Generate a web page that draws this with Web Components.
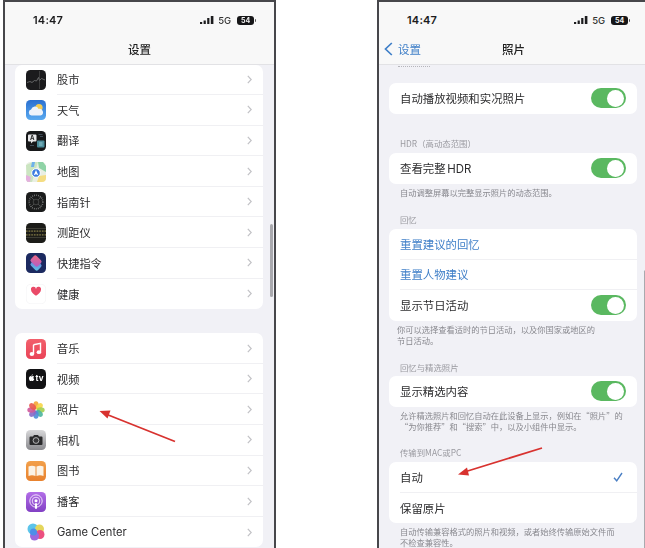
<!DOCTYPE html>
<html lang="zh"><head><meta charset="utf-8"><title>设置 照片</title>
<style>
html,body{margin:0;padding:0;background:#fff;}
body{width:645px;height:548px;overflow:hidden;position:relative;font-family:Inter,"Noto Sans CJK SC",sans-serif;color:#2c2c2e;}
#page{display:flex;gap:101px;padding-left:3px;filter:blur(.5px);}
#arrows{position:absolute;left:0;top:0;}
</style></head><body>
<div id="page">
<ios-phone nav="设置" thumb-top="224" thumb-h="73">
  <ios-card>
    <ios-row icon="stocks" chevron>股市</ios-row>
    <ios-row icon="weather" chevron>天气</ios-row>
    <ios-row icon="translate" chevron>翻译</ios-row>
    <ios-row icon="maps" chevron>地图</ios-row>
    <ios-row icon="compass" chevron>指南针</ios-row>
    <ios-row icon="measure" chevron>测距仪</ios-row>
    <ios-row icon="shortcuts" chevron>快捷指令</ios-row>
    <ios-row icon="health" chevron last>健康</ios-row>
  </ios-card>
  <ios-card style="margin-top:24px">
    <ios-row icon="music" chevron>音乐</ios-row>
    <ios-row icon="tv" chevron>视频</ios-row>
    <ios-row icon="photos" chevron>照片</ios-row>
    <ios-row icon="camera" chevron>相机</ios-row>
    <ios-row icon="books" chevron>图书</ios-row>
    <ios-row icon="podcasts" chevron>播客</ios-row>
    <ios-row icon="gamecenter" chevron last>Game Center</ios-row>
  </ios-card>
</ios-phone>
<ios-phone nav="照片" back="设置" thumb-top="270" thumb-h="300">
  <ios-clip></ios-clip>
  <ios-card style="margin-top:15.5px"><ios-row plain toggle last>自动播放视频和实况照片</ios-row></ios-card>
  <ios-head style="margin-top:24.4px">HDR（高动态范围）</ios-head>
  <ios-card><ios-row plain toggle last>查看完整 HDR</ios-row></ios-card>
  <ios-note>自动调整屏幕以完整显示照片的动态范围。</ios-note>
  <ios-head style="margin-top:16.4px">回忆</ios-head>
  <ios-card>
    <ios-row plain link>重置建议的回忆</ios-row>
    <ios-row plain link>重置人物建议</ios-row>
    <ios-row plain toggle last>显示节日活动</ios-row>
  </ios-card>
  <ios-note style="padding-left:8px">你可以选择查看适时的节日活动，以及你国家或地区的<br>节日活动。</ios-note>
  <ios-head style="margin-top:16.7px;margin-bottom:4px">回忆与精选照片</ios-head>
  <ios-card><ios-row plain toggle last>显示精选内容</ios-row></ios-card>
  <ios-note>允许精选照片和回忆自动在此设备上显示，例如在“照片”的<br>“为你推荐”和“搜索”中，以及小组件中显示。</ios-note>
  <ios-head style="margin-top:15.9px">传输到MAC或PC</ios-head>
  <ios-card>
    <ios-row plain check>自动</ios-row>
    <ios-row plain last>保留原片</ios-row>
  </ios-card>
  <ios-note style="padding-top:3px">自动传输兼容格式的照片和视频，或者始终传输原始文件而<br>不检查兼容性。</ios-note>
</ios-phone>
</div>
<svg id="arrows" width="645" height="548" viewBox="0 0 645 548" fill="none">
  <path d="M175 441.5 107 414.5" stroke="#d8322f" stroke-width="1.8"/>
  <path d="M99.500 411 110.500 410.500 107.500 418.500Z" fill="#d8322f"/>
  <path d="M542 448 466 471.500" stroke="#d8322f" stroke-width="1.800"/>
  <path d="M458 474.500 467 467.500 469 475.500Z" fill="#d8322f"/>
</svg>
<script>
const ICONS={
stocks:`<rect width="20" height="20" rx="4.500" fill="#1b1b1d"/><path d="M1 12.500 4 11.500 6 12.500 8.500 10.500 10.500 11 12.500 7.500 13.500 10.500 15.500 8.500 19 10" stroke="#77787a" stroke-width=".8" fill="none"/><path d="M13.500 1V19" stroke="#555" stroke-width=".6"/>`,
weather:`<defs><linearGradient id="w" x1="0" y1="0" x2="0" y2="1"><stop offset="0" stop-color="#2a6fd0"/><stop offset="1" stop-color="#5aaaf0"/></linearGradient></defs><rect width="20" height="20" rx="4.500" fill="url(#w)"/><circle cx="13" cy="7.500" r="3.600" fill="#f4cd55"/><path d="M5.500 15.500a3 3 0 0 1-.4-5.900 4 4 0 0 1 7.500-.7 3.300 3.300 0 0 1 1.900 6.600Z" fill="#eef3fa"/>`,
translate:`<rect width="20" height="20" rx="4.500" fill="#17181a"/><path d="M3 3.500h6.500a1 1 0 0 1 1 1v5a1 1 0 0 1-1 1H7l-2 2v-2H3a1 1 0 0 1-1-1v-5a1 1 0 0 1 1-1Z" fill="#e8e8ea"/><text x="6.200" y="9.300" font-size="6" font-family="Inter" font-weight="700" text-anchor="middle" fill="#222">A</text><rect x="11" y="9.500" width="7.500" height="7" rx="1" fill="#4b8c9a"/><path d="M13 12h3.500M13 14h3.500" stroke="#a8d8e0" stroke-width=".8"/><path d="M12.500 3.500h4M14 5.500h3M4 14.500h4" stroke="#4a5a68" stroke-width=".8"/>`,
maps:`<rect width="20" height="20" rx="4.500" fill="#e9efe3"/><path d="M0 3 7 0h5L6 20H1Z" fill="#cbe5c1"/><path d="M12 0h5l3 4v6L13 6Z" fill="#8fd3a6"/><path d="M0 13l5 2-1 5H3q-3 0-3-3Z" fill="#e4b1de"/><path d="M13 14l7-1v3q0 4-4 4h-5Z" fill="#f5dd82"/><path d="M6 0h3L8 5H5Z" fill="#6fb1ea"/><circle cx="10" cy="11" r="4.300" fill="#3b7be0" stroke="#fff" stroke-width="1"/><path d="M10 8 12.300 13.300 10 12.300 7.700 13.300Z" fill="#fff"/>`,
compass:`<rect width="20" height="20" rx="4.500" fill="#1b1c1c"/><circle cx="10" cy="10" r="6.800" stroke="#8b8d8c" stroke-width="1.600" stroke-dasharray=".7 1.300" fill="none"/><path d="M5 5 15 15M15 5 5 15" stroke="#5e605f" stroke-width=".7"/><circle cx="10" cy="10" r="2.800" fill="#1b1c1c" stroke="#6a6c6b" stroke-width=".5"/>`,
measure:`<rect width="20" height="20" rx="4.500" fill="#1c1c18"/><path d="M0 5.500h20M0 14.500h20" stroke="#56564a" stroke-width=".6"/><path d="M0 8.200h20M0 11.800h20" stroke="#b4a85c" stroke-width="1.300" stroke-dasharray=".7 .9"/>`,
shortcuts:`<defs><linearGradient id="s1" x1="0" y1="0" x2="1" y2="1"><stop offset="0" stop-color="#ee6a80"/><stop offset="1" stop-color="#b25cc8"/></linearGradient><linearGradient id="s2" x1="0" y1="0" x2="1" y2="1"><stop offset="0" stop-color="#6e74d8"/><stop offset="1" stop-color="#5cc4e4"/></linearGradient></defs><rect width="20" height="20" rx="4.500" fill="#1c2a60"/><rect x="5" y="8" width="10" height="8" rx="2" transform="rotate(45 10 12)" fill="url(#s2)"/><rect x="5" y="4" width="10" height="8" rx="2" transform="rotate(45 10 8)" fill="url(#s1)"/>`,
health:`<rect x=".25" y=".25" width="19.500" height="19.500" rx="4.500" fill="#fff" stroke="#eeeef0" stroke-width=".5"/><path d="M12 11.800C9.500 10 7 8 7 5.700a2.500 2.500 0 0 1 5-.7 2.500 2.500 0 0 1 5 .7c0 2.300-2.500 4.300-5 6.100Z" transform="translate(-2)" fill="#ea4a68"/>`,
music:`<defs><linearGradient id="m" x1="0" y1="0" x2="0" y2="1"><stop offset="0" stop-color="#f2606c"/><stop offset="1" stop-color="#ea4458"/></linearGradient></defs><rect width="20" height="20" rx="4.500" fill="url(#m)"/><path d="M7.500 5.800 14.500 4.300V13" stroke="#fff" stroke-width="1.400" fill="none"/><path d="M7.500 5.800V15" stroke="#fff" stroke-width="1.400"/><ellipse cx="5.900" cy="15" rx="2.300" ry="1.900" fill="#fff"/><ellipse cx="12.900" cy="13.200" rx="2.300" ry="1.900" fill="#fff"/>`,
tv:`<rect width="20" height="20" rx="4.500" fill="#121214"/><path d="M5.500 7.500c.7 0 1-.5 1.500-.5a1.500 1.500 0 0 1 1.100.7c-1 .6-.8 2 .2 2.400-.3.900-.9 1.900-1.500 1.900-.4 0-.7-.3-1.200-.3s-.8.3-1.200.3C3.700 12 3 10.500 3 9.400 3 8 3.900 7.100 4.800 7.100c.3 0 .5.400.7.400ZM6.800 5.300c.1.800-.6 1.500-1.300 1.500 0-.8.600-1.400 1.300-1.500Z" fill="#fff"/><text x="13.500" y="12.200" font-size="8" font-family="Inter" font-weight="700" text-anchor="middle" fill="#fff">tv</text>`,
photos:`<rect width="20" height="20" rx="4.500" fill="#fff"/><g style="mix-blend-mode:multiply">${['#f4a63a','#f6d64a','#a5cf52','#4fb6a0','#4f8fd8','#8a6cc8','#d05a9c','#e95a50'].map((c,i)=>`<ellipse cx="10" cy="5.300" rx="2.700" ry="4" fill="${c}" fill-opacity=".92" transform="rotate(${i*45} 10 10)"/>`).join('')}</g>`,
camera:`<defs><linearGradient id="c" x1="0" y1="0" x2="0" y2="1"><stop offset="0" stop-color="#d8d8da"/><stop offset="1" stop-color="#8a8a8e"/></linearGradient></defs><rect width="20" height="20" rx="4.500" fill="url(#c)"/><path d="M4.500 6.500H7l1-1.500h4l1 1.500h2.500a1 1 0 0 1 1 1V14a1 1 0 0 1-1 1h-11a1 1 0 0 1-1-1V7.500a1 1 0 0 1 1-1Z" fill="#2a2a2c"/><circle cx="10" cy="10.500" r="2.900" fill="#38383a" stroke="#d0d0d2" stroke-width=".8"/>`,
books:`<defs><linearGradient id="b" x1="0" y1="0" x2="0" y2="1"><stop offset="0" stop-color="#f2a04a"/><stop offset="1" stop-color="#e8822e"/></linearGradient></defs><rect width="20" height="20" rx="4.500" fill="url(#b)"/><path d="M2.500 5.500Q6 4 9.500 5.500V15Q6 13.700 2.500 15ZM10.500 5.500Q14 4 17.500 5.500V15Q14 13.700 10.500 15Z" fill="#fbf3e6"/>`,
podcasts:`<defs><linearGradient id="p" x1="0" y1="0" x2="0" y2="1"><stop offset="0" stop-color="#b36ee8"/><stop offset="1" stop-color="#8240c4"/></linearGradient></defs><rect width="20" height="20" rx="4.500" fill="url(#p)"/><circle cx="10" cy="9" r="6.200" stroke="#f0e4fa" stroke-width="1" fill="none"/><circle cx="10" cy="9" r="3.800" stroke="#f0e4fa" stroke-width=".9" fill="none"/><circle cx="10" cy="8.800" r="1.500" fill="#fff"/><rect x="9" y="11" width="2" height="6" rx="1" fill="#fff"/>`,
gamecenter:`<rect width="20" height="20" rx="4.500" fill="#fff"/><circle cx="7" cy="7" r="5.500" fill="#5cc4ea"/><circle cx="13.500" cy="7" r="4.500" fill="#e4d65c"/><circle cx="14" cy="12.500" r="4.500" fill="#ec4f80"/><circle cx="8.500" cy="14" r="4.500" fill="#9c68dc"/><circle cx="7.500" cy="10" r="3.500" fill="#4d8ee8"/>`
};
const define=(name,css,html)=>{
  customElements.define(name,class extends HTMLElement{
    connectedCallback(){
      if(this.shadowRoot)return;
      const r=this.attachShadow({mode:'open'});
      r.innerHTML=`<style>${css}</style>${typeof html==='function'?html(this):html}`;
    }
  });
};
define('app-icon',`:host{display:block;width:20px;height:20px;flex:none}svg{display:block}`,
  h=>`<svg width="20" height="20" viewBox="0 0 20 20">${ICONS[h.getAttribute('name')]||''}</svg>`);
define('ios-toggle',`:host{display:block;width:35px;height:20px;border-radius:10px;background:#5ab860;flex:none;padding:1.500px;box-sizing:border-box}
  i{display:block;width:17px;height:17px;border-radius:50%;background:#fff;margin-left:auto}`,`<i></i>`);
define('status-bar',`:host{display:flex;align-items:center;height:18px;padding:9px 18px 0 28px;font-family:Inter,sans-serif;color:#1c1c1e}
  .t{font-size:11px;font-weight:600;letter-spacing:.2px;flex:1}
  svg{display:block}
  .g{font-size:9.500px;font-weight:500;color:#333;margin:0 6px 0 4px}
  .b{display:flex;align-items:center}
  .p{width:17px;height:9px;border-radius:3px;background:#161618;color:#f4f4f4;font-size:7px;font-weight:700;line-height:9px;text-align:center}
  .n{width:1.200px;height:3px;background:#555;margin-left:.6px;border-radius:0 1px 1px 0}`,
  `<span class="t">14:47</span>
   <svg width="14" height="8" viewBox="0 0 14 8" fill="#1c1c1e"><rect x="0" y="6" width="2.200" height="2"/><rect x="3.600" y="4.500" width="2.200" height="3.500"/><rect x="7.200" y="2" width="2.200" height="6"/><rect x="10.800" y="0" width="2.600" height="8"/></svg>
   <span class="g">5G</span><span class="b"><span class="p">54</span><span class="n"></span></span>`);
define('nav-bar',`:host{display:grid;grid-template-columns:1fr auto 1fr;align-items:center;height:24px;padding:7.500px 0 0;font-size:11.500px;font-family:Inter,"Noto Sans CJK SC",sans-serif;color:#222}
  .l{display:flex;align-items:center;gap:5px;padding-left:5px;color:#3f7fc8}
  .c{font-weight:500;grid-column:2}
  svg{display:block}`,
  h=>{const b=h.getAttribute('back');return `<span class="l">${b?`<svg width="9" height="14" viewBox="0 0 9 14" fill="none"><path d="M7.800 1 1.500 7l6.300 6" stroke="#3f7fc8" stroke-width="1.700"/></svg><span>${b}</span>`:''}</span><span class="c">${h.getAttribute('title')||''}</span><span></span>`});
define('ios-phone',`:host{display:flex;flex-direction:column;flex:none;position:relative;width:273px;height:548px;box-sizing:border-box;border:solid #47474b;border-width:2px 2px 0;background:#f1f1f6;overflow:hidden}
  header{background:#f8f8f8;border-bottom:1px solid #e2e2e5;height:62.500px;box-sizing:border-box;flex:none}
  .list{flex:1;min-height:0;overflow:hidden;padding:0 11px 0 10px}
  .thumb{position:absolute;right:1.500px;width:2.500px;background:#a9a9ae;border-radius:2px}`,
  h=>`<header><status-bar></status-bar><nav-bar title="${h.getAttribute('nav')}" ${h.hasAttribute('back')?`back="${h.getAttribute('back')}"`:''}></nav-bar></header>
  <div class="list"><slot></slot></div>
  <div class="thumb" style="top:${h.getAttribute('thumb-top')-2}px;height:${h.getAttribute('thumb-h')}px"></div>`);
define('ios-card',`:host{display:block;background:#fff;border-radius:7px;overflow:hidden}`,`<slot></slot>`);
define('ios-row',`:host{display:flex;align-items:stretch;height:30.600px;font-size:11.200px;color:#2c2c2e;font-family:Inter,"Noto Sans CJK SC",sans-serif}
  .i{display:flex;align-items:center;padding:0 11px;flex:none}
  .m{flex:1;min-width:0;display:flex;align-items:center;border-bottom:1px solid #f0f0f3;padding-right:11.500px;box-sizing:border-box}
  .s{flex:1;white-space:nowrap}
  :host([plain]) .m{margin-left:11px;padding-right:11.500px}
  :host([last]) .m{border-bottom:0}
  :host([link]) .s{color:#3f7fc8}
  :host([plain]) .s{font-size:11.400px;word-spacing:-1.500px}
  svg{display:block}`,
  h=>{const ic=h.getAttribute('icon');
    return `${ic?`<span class="i"><app-icon name="${ic}"></app-icon></span>`:''}<div class="m"><span class="s"><slot></slot></span>
    ${h.hasAttribute('chevron')?`<svg width="5" height="9" viewBox="0 0 5 9" fill="none"><path d="M.8.8 4.200 4.500.8 8.200" stroke="#c2c2c6" stroke-width="1.200"/></svg>`:''}
    ${h.hasAttribute('toggle')?`<ios-toggle></ios-toggle>`:''}
    ${h.hasAttribute('check')?`<svg style="margin-right:3px" width="10" height="10" viewBox="0 0 10 10" fill="none"><path d="M1 5.800 3.700 8.800 9 1" stroke="#4a7fc4" stroke-width="1.400"/></svg>`:''}</div>`});
define('ios-head',`:host{display:block;font-size:8.400px;line-height:10px;color:#9a9aa0;padding-left:11px;margin-bottom:5px;white-space:nowrap;font-family:"Noto Sans CJK SC",sans-serif}`,`<slot></slot>`);
define('ios-note',`:host{display:block;font-size:8.250px;line-height:10.500px;color:#88888e;padding:3.500px 0 0 11px;white-space:nowrap;font-family:"Noto Sans CJK SC",sans-serif}`,`<slot></slot>`);
define('ios-clip',`:host{display:block;height:3px;overflow:hidden;margin:0 0 0 9px;width:32px}
  i{display:block;margin-top:1px;height:0;border-top:1px dotted #b5b5ba}`,`<i></i>`);
</script>
</body></html>
